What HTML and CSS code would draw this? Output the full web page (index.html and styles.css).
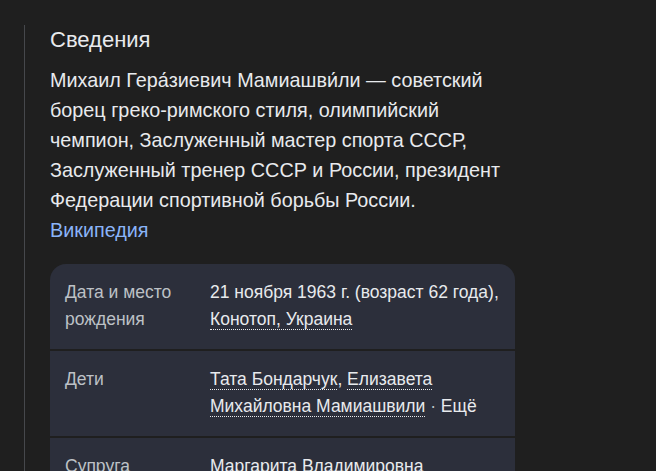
FILE: index.html
```html
<!DOCTYPE html>
<html lang="ru">
<head>
<meta charset="utf-8">
<link rel="stylesheet" href="styles.css">
</head>
<body>
<div class="page">
  <section class="panel">
    <h2 class="title">Сведения</h2>
    <p class="desc">Михаил Гера́зиевич Мамиашви́ли — советский борец греко-римского стиля, олимпийский чемпион, Заслуженный мастер спорта СССР, Заслуженный тренер СССР и России, президент Федерации спортивной борьбы России. <a class="wiki" href="#">Википедия</a></p>
    <div class="facts">
      <div class="row">
        <div class="label">Дата и место рождения</div>
        <div class="value">21 ноября 1963 г. (возраст 62 года), <span class="link">Конотоп, Украина</span></div>
      </div>
      <div class="row">
        <div class="label">Дети</div>
        <div class="value"><span class="link">Тата Бондарчук</span>, <span class="link">Елизавета Михайловна Мамиашвили</span> <span class="dot">·</span> Ещё</div>
      </div>
      <div class="row">
        <div class="label">Супруга</div>
        <div class="value">Маргарита Владимировна</div>
      </div>
    </div>
  </section>
</div>
</body>
</html>
```

FILE: styles.css
```css
html, body {
  margin: 0;
  padding: 0;
  background: #1f1f1f;
  height: 100%;
  overflow: hidden;
}

body {
  font-family: "Liberation Sans", Arial, sans-serif;
  color: #e8eaed;
}

.page {
  padding: 25px 0 0 24px;
}

.panel {
  border-left: 1px solid #46484c;
  padding-left: 25px;
  width: 465px;
  min-height: 460px;
  padding-top: 1px;
}

.title {
  margin: 0;
  font-size: 22px;
  line-height: 28px;
  font-weight: normal;
  color: #e8eaed;
}

.desc {
  margin: 11px 0 0 0;
  font-size: 19.8px;
  line-height: 30px;
  color: #e8eaed;
}

.wiki {
  color: #8ab4f8;
  text-decoration: none;
}

.facts {
  margin-top: 19px;
  display: flex;
  flex-direction: column;
  gap: 2px;
  border-radius: 16px 16px 0 0;
  overflow: hidden;
}

.row {
  background: #2c2f3b;
  display: grid;
  grid-template-columns: 145px 1fr;
  padding: 15px 10px 16px 15px;
  font-size: 17.5px;
  line-height: 27px;
  min-height: 54px;
}

.label {
  color: #bdc1c6;
  padding-right: 10px;
}

.value {
  color: #e8eaed;
}

.link {
  border-bottom: 1px dotted #e8eaed;
}

.dot {
  color: #bdc1c6;
}
```
